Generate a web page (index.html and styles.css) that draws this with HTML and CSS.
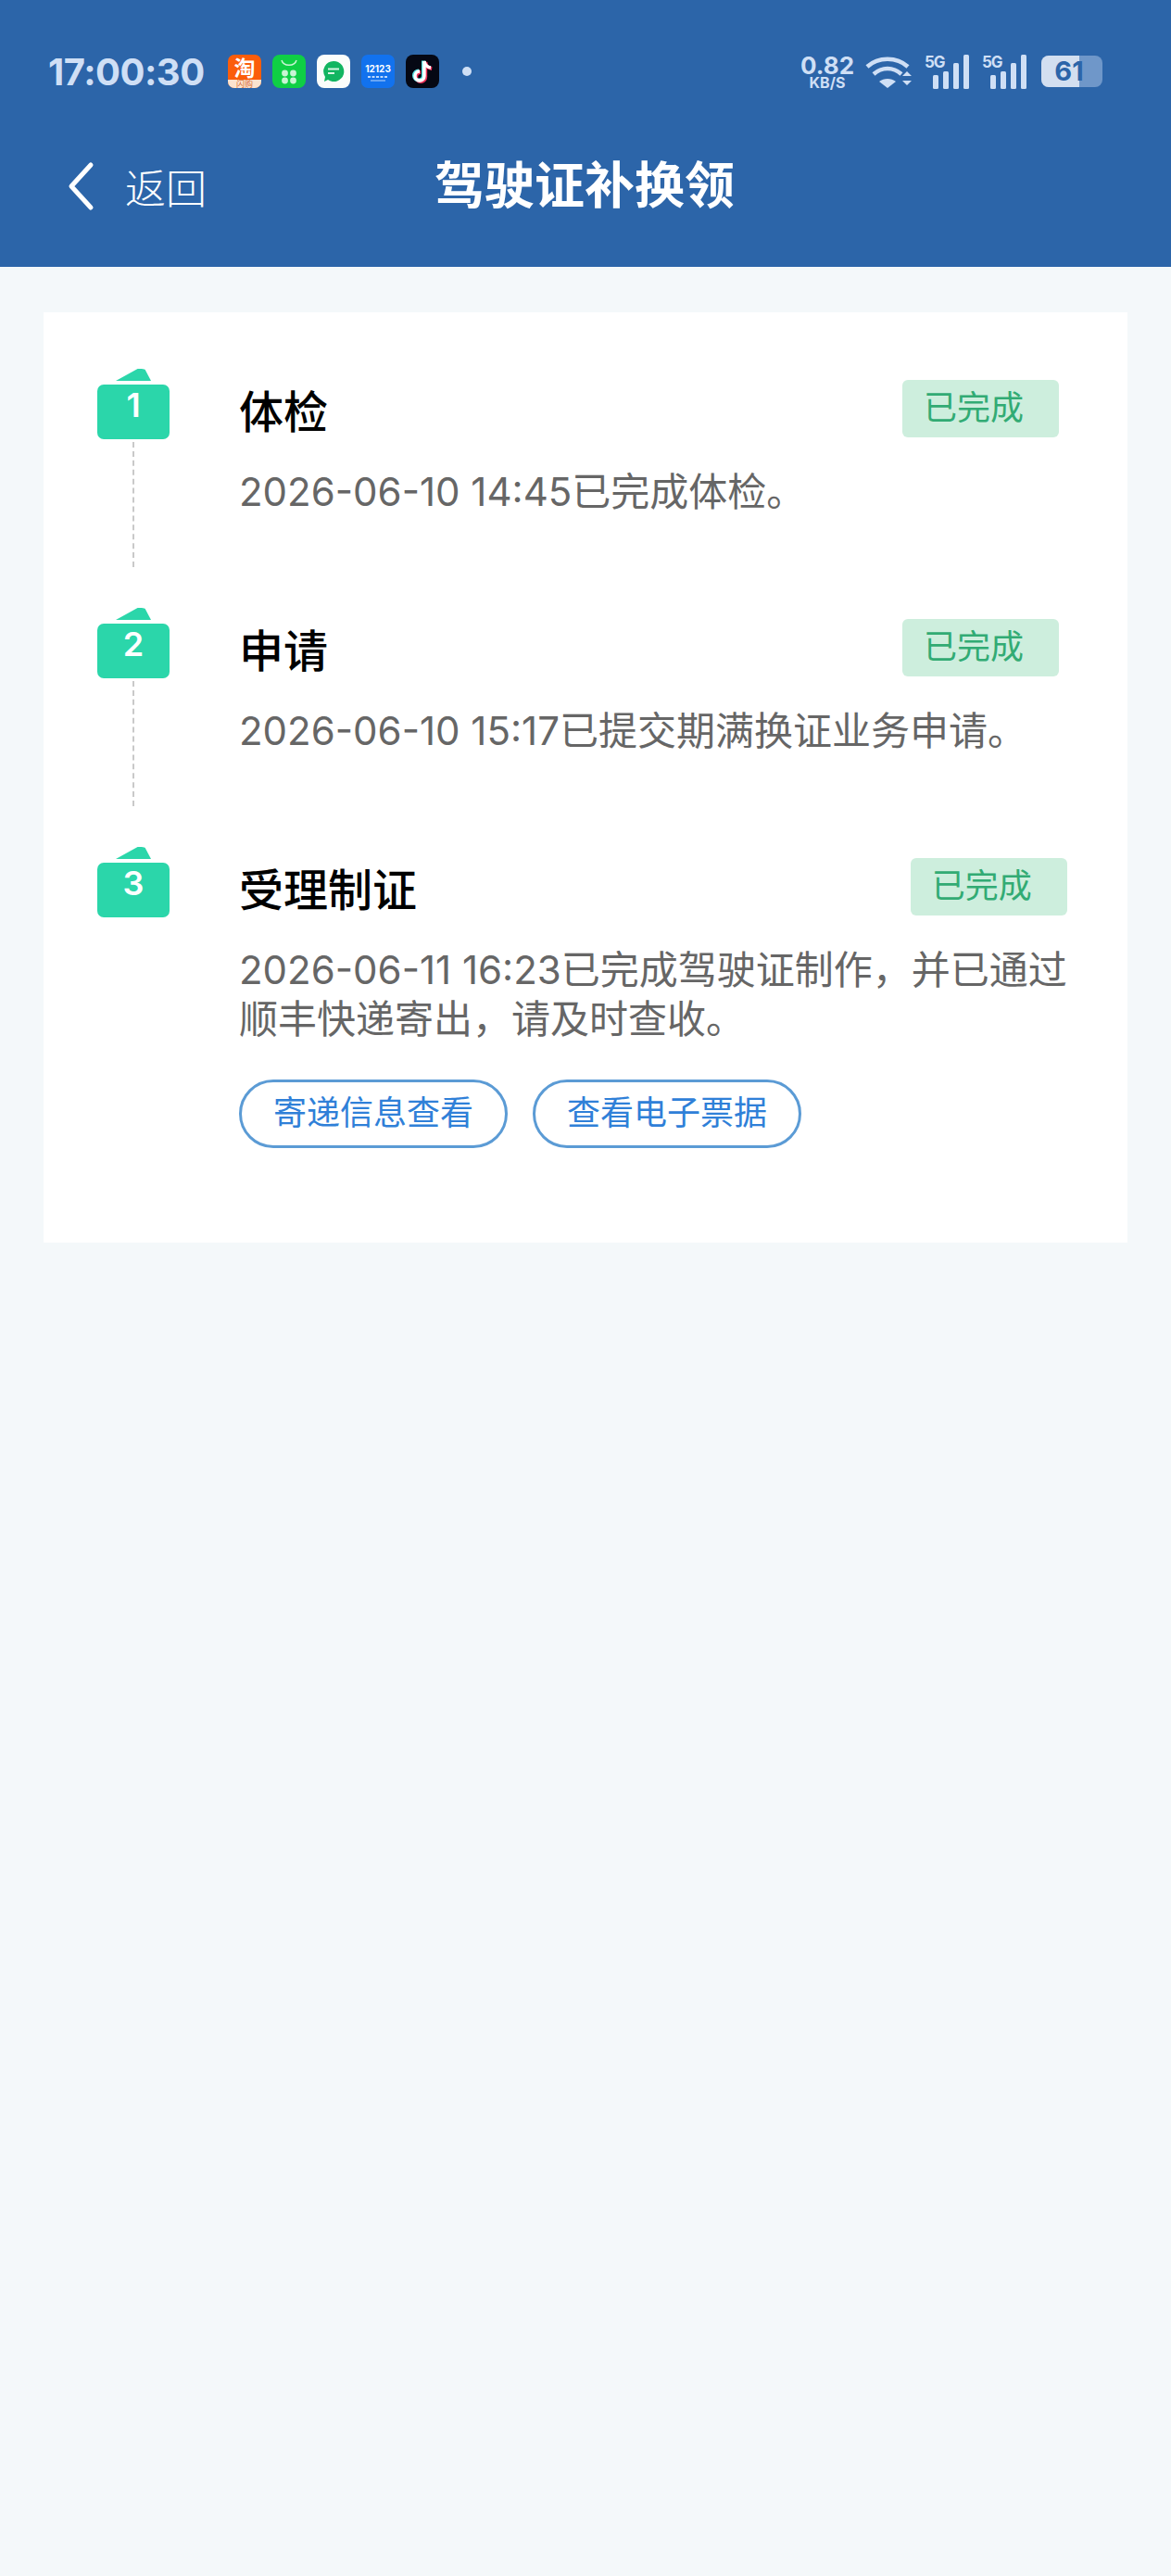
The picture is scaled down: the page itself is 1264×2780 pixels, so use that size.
FILE: index.html
```html
<!DOCTYPE html>
<html lang="zh-CN">
<head>
  <meta charset="UTF-8" />
  <meta name="viewport" content="width=device-width, initial-scale=1" />
  <title>驾驶证补换领</title>
  <link rel="stylesheet" href="styles.css">
</head>
<body>

  <header class="header">
    <div class="status-bar">
      <span class="clock">17:00:30</span>
      <div class="app-icons">
        <svg class="app-icon" viewBox="0 0 36 36">
          <defs><clipPath id="clip-tao"><rect width="36" height="36" rx="7"/></clipPath></defs>
          <g clip-path="url(#clip-tao)">
            <rect width="36" height="36" fill="#fb5d0b"/>
            <rect y="27" width="36" height="9" fill="#fbe3cf"/>
            <text x="18" y="23" class="tao-main">淘</text>
            <text x="18" y="35" class="tao-sub">闪购</text>
          </g>
        </svg>
        <svg class="app-icon" viewBox="0 0 36 36">
          <rect width="36" height="36" rx="8" fill="#0fcf45"/>
          <path d="M10 6c2 7 14 7 16 0" fill="none" stroke="#c9f5d4" stroke-width="1.5"/>
          <circle cx="13.5" cy="20" r="3.4" fill="#c9f5d4"/>
          <circle cx="22.5" cy="20" r="3.4" fill="#c9f5d4"/>
          <circle cx="13.5" cy="28" r="3.4" fill="#c9f5d4"/>
          <circle cx="22.5" cy="28" r="3.4" fill="#c9f5d4"/>
        </svg>
        <svg class="app-icon" viewBox="0 0 36 36">
          <rect width="36" height="36" rx="8" fill="#fbfdfb"/>
          <path d="M18 7a11 11 0 1 1-6 20l-4 2 1-5a11 11 0 0 1 9-17z" fill="#12b561"/>
          <path d="M12 15.5h12M12 20h7" stroke="#d8f5e3" stroke-width="2" fill="none"/>
        </svg>
        <svg class="app-icon" viewBox="0 0 36 36">
          <rect width="36" height="36" rx="7" fill="#1272ee"/>
          <text x="18" y="19" class="num-12123">12123</text>
          <path d="M7 24h22" stroke="#bcd8fb" stroke-width="2" stroke-dasharray="3 1.5"/>
          <path d="M10 28h16" stroke="#bcd8fb" stroke-width="1"/>
        </svg>
        <svg class="app-icon" viewBox="0 0 36 36">
          <rect width="36" height="36" rx="8" fill="#050814"/>
          <path d="M20 7v16a5 5 0 1 1-5-5" fill="none" stroke="#f0325a" stroke-width="4" transform="translate(1.2 1)"/>
          <path d="M20 7c.5 4 3 6.500 7 7" fill="none" stroke="#f0325a" stroke-width="4" transform="translate(1.2 1)"/>
          <path d="M20 7v16a5 5 0 1 1-5-5" fill="none" stroke="#5ce4e6" stroke-width="4" transform="translate(-1 -.5)"/>
          <path d="M20 7v16a5 5 0 1 1-5-5" fill="none" stroke="#fff" stroke-width="3.400"/>
          <path d="M20 7c.5 4 3 6.500 7 7" fill="none" stroke="#fff" stroke-width="3.400"/>
        </svg>
        <span class="dot"></span>
      </div>
      <div class="status-right">
        <div class="speed">
          <span class="speed-num">0.82</span>
          <span class="speed-unit">KB/S</span>
        </div>
        <svg class="wifi" viewBox="0 0 50 37">
          <path d="M2 13C14 2 34 2 46 13" fill="none" stroke="#cfdff5" stroke-width="4.500"/>
          <path d="M9 21C18 13 30 13 39 21" fill="none" stroke="#cfdff5" stroke-width="4.500"/>
          <path d="M15 29C20 25 28 25 33 29L24 36z" fill="#cfdff5" transform="translate(0 0)"/>
          <path d="M40 23l5-5 5 5zM40 28l5 5 5-5z" fill="#cfdff5"/>
        </svg>
        <svg class="signal" viewBox="0 0 48 37">
          <text x="0" y="14" class="sig-text">5G</text>
          <rect x="9" y="22" width="6" height="15" rx="1.500"/>
          <rect x="20" y="18" width="6" height="19" rx="1.500"/>
          <rect x="31" y="9" width="6" height="28" rx="1.500"/>
          <rect x="42" y="0" width="6" height="37" rx="1.500"/>
        </svg>
        <svg class="signal" viewBox="0 0 48 37">
          <text x="0" y="14" class="sig-text">5G</text>
          <rect x="9" y="22" width="6" height="15" rx="1.500"/>
          <rect x="20" y="18" width="6" height="19" rx="1.500"/>
          <rect x="31" y="9" width="6" height="28" rx="1.500"/>
          <rect x="42" y="0" width="6" height="37" rx="1.500"/>
        </svg>
        <div class="battery">
          <div class="battery-level"></div>
          <span class="battery-num">61</span>
        </div>
      </div>
    </div>

    <nav class="nav">
      <a class="back" href="#">
        <svg class="back-icon" viewBox="0 0 30 54">
          <path d="M26 4L5 27l21 23" fill="none" stroke="#fff" stroke-width="5" stroke-linecap="round" stroke-linejoin="round"/>
        </svg>
        <span>返回</span>
      </a>
      <h1 class="page-title">驾驶证补换领</h1>
    </nav>
  </header>

  <main class="card">
    <section class="step">
      <div class="step-mark">
        <span class="roof"></span>
        <span class="num">1</span>
        <span class="line"></span>
      </div>
      <div class="step-body">
        <div class="step-head">
          <h2>体检</h2>
          <span class="badge">已完成</span>
        </div>
        <p class="desc">2026-06-10 14:45已完成体检。</p>
      </div>
    </section>

    <section class="step">
      <div class="step-mark">
        <span class="roof"></span>
        <span class="num">2</span>
        <span class="line"></span>
      </div>
      <div class="step-body">
        <div class="step-head">
          <h2>申请</h2>
          <span class="badge">已完成</span>
        </div>
        <p class="desc">2026-06-10 15:17已提交期满换证业务申请。</p>
      </div>
    </section>

    <section class="step last">
      <div class="step-mark">
        <span class="roof"></span>
        <span class="num">3</span>
      </div>
      <div class="step-body">
        <div class="step-head">
          <h2>受理制证</h2>
          <span class="badge">已完成</span>
        </div>
        <p class="desc">2026-06-11 16:23已完成驾驶证制作，并已通过<br>顺丰快递寄出，请及时查收。</p>
        <div class="actions">
          <a class="pill" href="#">寄递信息查看</a>
          <a class="pill" href="#">查看电子票据</a>
        </div>
      </div>
    </section>
  </main>

</body>
</html>
```

FILE: styles.css
```css
* {
  box-sizing: border-box;
}
html, body {
  margin: 0;
  padding: 0;
}
body {
  min-height: 2780px;
  background: #f4f8fa;
  font-family: Inter, "Noto Sans CJK SC", sans-serif;
  color: #333;
}
a {
  text-decoration: none;
  color: inherit;
}

/* header */
.header {
  height: 288px;
  background: #2c65a9;
  padding-top: 58px;
}
.status-bar {
  display: flex;
  align-items: center;
  height: 38px;
  padding: 0 74px 0 52px;
  color: #cfdff5;
}
.clock {
  width: 194px;
  font-size: 40px;
  font-weight: 700;
  letter-spacing: -0.5px;
}
.app-icons {
  display: flex;
  align-items: center;
  gap: 12px;
}
.app-icon {
  width: 36px;
  height: 36px;
}
.tao-main {
  font-size: 23px;
  font-weight: 700;
  fill: #fff;
  text-anchor: middle;
}
.tao-sub {
  font-size: 9px;
  fill: #d9703a;
  text-anchor: middle;
}
.num-12123 {
  font-size: 10px;
  font-weight: 700;
  fill: #fff;
  text-anchor: middle;
}
.dot {
  width: 10px;
  height: 10px;
  margin-left: 13px;
  border-radius: 50%;
  background: #cfdff5;
}
.status-right {
  display: flex;
  align-items: center;
  margin-left: auto;
}
.speed {
  display: flex;
  flex-direction: column;
  align-items: center;
  width: 58px;
  margin-right: 12px;
  font-weight: 700;
}
.speed-num {
  font-size: 26px;
  line-height: 23px;
}
.speed-unit {
  font-size: 16px;
  line-height: 14px;
}
.wifi {
  width: 50px;
  height: 37px;
  margin-right: 14px;
}
.signal {
  width: 48px;
  height: 37px;
  margin-right: 14px;
  fill: #cfdff5;
}
.sig-text {
  font-size: 17px;
  font-weight: 700;
  letter-spacing: -1px;
}
.battery {
  position: relative;
  width: 66px;
  height: 34px;
  margin-left: 2px;
  border-radius: 8px;
  background: #6f97c9;
  overflow: hidden;
  text-align: center;
}
.battery-level {
  position: absolute;
  left: 0;
  top: 0;
  bottom: 0;
  width: 41px;
  background: #d3dff0;
}
.battery-num {
  position: relative;
  display: block;
  padding-right: 6px;
  font-size: 29px;
  font-weight: 700;
  line-height: 34px;
  color: #2c65a9;
}

.nav {
  position: relative;
  display: flex;
  align-items: center;
  height: 54px;
  margin-top: 78px;
  padding-left: 72px;
  color: #fff;
}
.back {
  display: flex;
  align-items: center;
  gap: 33px;
  font-size: 44px;
  font-weight: 300;
}
.back-icon {
  width: 30px;
  height: 54px;
}
.page-title {
  position: absolute;
  left: 0;
  top: 0;
  width: 1262px;
  margin: 0;
  text-align: center;
  font-size: 54px;
  font-weight: 700;
  line-height: 54px;
}

/* card */
.card {
  width: 1170px;
  margin: 49px 0 0 47px;
  padding: 61px 74px 102px 58px;
  background: #fff;
}
.step {
  display: flex;
  min-height: 258px;
}
.step.last {
  min-height: 0;
}
.step-mark {
  display: flex;
  flex-direction: column;
  align-items: center;
  flex: none;
  width: 78px;
  padding-bottom: 44px;
}
.step.last .step-mark {
  padding-bottom: 0;
}
.roof {
  width: 38px;
  height: 13px;
  margin-bottom: 4px;
  background: #2bd6aa;
  border-radius: 0 10px 0 0;
  clip-path: polygon(0 100%, 62% 0, 82% 0, 100% 100%);
}
.num {
  width: 78px;
  height: 59px;
  border-radius: 7px;
  background: #2bd6aa;
  color: #fff;
  font-size: 36px;
  font-weight: 600;
  line-height: 44px;
  text-align: center;
}
.line {
  flex: 1;
  width: 0;
  margin-top: 3px;
  border-left: 2px dashed #c9c9c9;
}
.step-body {
  flex: 1;
  margin-left: 75px;
  padding-top: 12px;
}
.step-head {
  display: flex;
  align-items: center;
  justify-content: space-between;
  height: 62px;
}
.step-head h2 {
  margin: 0;
  font-size: 48px;
  font-weight: 500;
  color: #000;
}
.badge {
  width: 169px;
  height: 62px;
  padding-left: 23px;
  border-radius: 6px;
  background: #cdeedd;
  color: #32ab74;
  font-size: 36px;
  line-height: 60px;
}
.desc {
  margin: 32px 0 0;
  font-size: 42px;
  line-height: 53px;
  color: #666;
  white-space: nowrap;
}
.actions {
  display: flex;
  gap: 27px;
  margin-top: 39px;
}
.pill {
  width: 290px;
  height: 74px;
  border: 3px solid #5b9bd5;
  border-radius: 37px;
  color: #2f80d8;
  font-size: 36px;
  line-height: 66px;
  text-align: center;
}
```
